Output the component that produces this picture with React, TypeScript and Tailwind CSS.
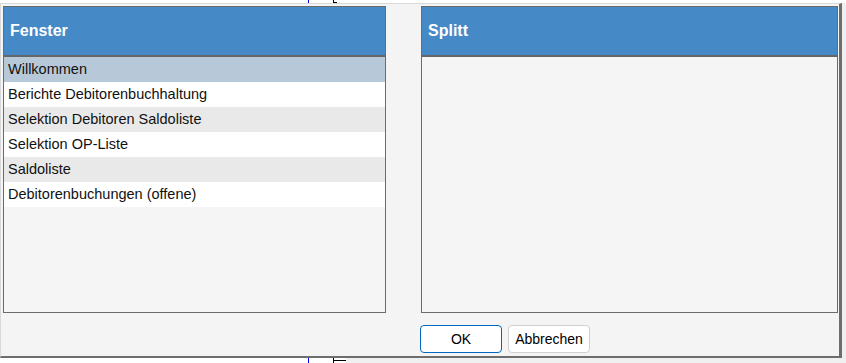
import React from 'react';

// Einträge der linken Liste
const windows = [
  'Willkommen',
  'Berichte Debitorenbuchhaltung',
  'Selektion Debitoren Saldoliste',
  'Selektion OP-Liste',
  'Saldoliste',
  'Debitorenbuchungen (offene)',
];

function Panel({ title, children, className }: { title: string; children?: React.ReactNode; className?: string }) {
  return (
    <div className={`flex flex-col h-[307px] border border-[#6b6b6b] bg-[#f5f5f5] ${className ?? ''}`}>
      <div className="h-[50px] shrink-0 bg-[#4589c6] border-b-2 border-[#666666] flex items-center px-[6px]">
        <span className="text-white font-bold text-[16px]">{title}</span>
      </div>
      <div className="flex-1">{children}</div>
    </div>
  );
}

export default function App() {
  return (
    <div
      className="w-[846px] h-[363px] bg-[#f0f0f0] flex flex-col overflow-hidden"
      style={{ fontFamily: '"Liberation Sans", Arial, sans-serif' }}
    >
      {/* Streifen oben */}
      <div className="h-[3px] shrink-0 bg-white flex">
        <div className="w-[308px]" />
        <div className="w-[1px] bg-[#0000ff]" />
        <div className="w-[24px]" />
        <div className="w-[1px] bg-black" />
        <div className="w-[3px] h-[1px] mt-[2px] bg-black" />
      </div>

      <div className="flex shrink-0">
        {/* Dialog */}
        <div className="w-[842px] h-[355px] bg-[#f4f4f4] border-t border-l border-[#d9d9d9] border-r-[3px] border-b-[2px] border-r-[#6d6d6d] border-b-[#6d6d6d] pl-[2px] pt-[2px] flex flex-col">
          <div className="flex">
            <Panel title="Fenster" className="w-[383px]">
              {windows.map((w, i) => (
                <div
                  key={w}
                  className={`h-[25px] flex items-center px-[4px] text-[14.5px] text-[#111111] ${
                    i === 0 ? 'bg-[#b7c9d8]' : i % 2 === 0 ? 'bg-[#e9e9e9]' : 'bg-white'
                  }`}
                >
                  {w}
                </div>
              ))}
            </Panel>
            <Panel title="Splitt" className="w-[417px] ml-[35px]" />
          </div>

          <div className="flex mt-[12px] pl-[417px] gap-[6px]">
            <button className="w-[82px] h-[28px] bg-white border border-[#0067c0] rounded-[4px] text-[14px] text-black">
              OK
            </button>
            <button className="w-[82px] h-[28px] bg-white border border-[#d0d0d0] rounded-[4px] text-[14px] text-black">
              Abbrechen
            </button>
          </div>
        </div>
        <div className="flex-1 bg-[#f0f0f0]" />
      </div>

      {/* Streifen unten */}
      <div className="flex-1 bg-white flex">
        <div className="w-[308px]" />
        <div className="w-[1px] bg-[#0000ff]" />
        <div className="w-[24px]" />
        <div className="w-[1px] bg-black" />
        <div className="w-[12px] h-[1px] mt-[2px] bg-black" />
        <div className="flex-1 bg-[#f0f0f0]" />
      </div>
    </div>
  );
}
